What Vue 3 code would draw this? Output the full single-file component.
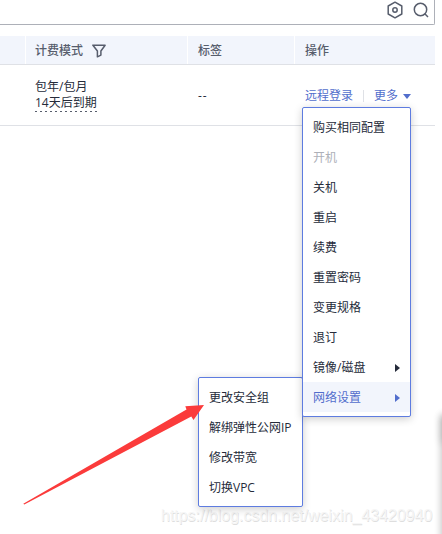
<script setup>
const items = [
  { label: '购买相同配置' },
  { label: '开机', disabled: true },
  { label: '关机' },
  { label: '重启' },
  { label: '续费' },
  { label: '重置密码' },
  { label: '变更规格' },
  { label: '退订' },
  { label: '镜像/磁盘', sub: true },
  { label: '网络设置', sub: true, active: true },
]
const subItems = ['更改安全组', '解绑弹性公网IP', '修改带宽', '切换VPC']
</script>

<template>
  <main class="page">
    <div class="search">
      <svg class="ico" width="18" height="18" viewBox="0 0 18 18">
        <path d="M9 1.2 15.8 5v8L9 16.8 2.2 13V5Z" stroke-linejoin="round" />
        <circle cx="9" cy="9" r="2.2" />
      </svg>
      <svg class="ico" width="18" height="18" viewBox="0 0 18 18">
        <circle cx="8.5" cy="8.5" r="6.2" />
        <path d="m12.8 12.8 3.2 3.2" />
      </svg>
    </div>

    <div class="row head">
      <div class="cell"></div>
      <div class="cell mode">
        计费模式
        <svg class="filter" width="14" height="14" viewBox="0 0 14 14">
          <path d="M.9 1.2h12.2L8.9 7v4.1l-3.5 1.7V7Z" stroke-linejoin="round" />
        </svg>
      </div>
      <div class="cell">标签</div>
      <div class="cell">操作</div>
    </div>

    <div class="row body">
      <div class="cell"></div>
      <div class="cell billing">
        <span>包年/包月</span>
        <span class="expire">14天后到期</span>
      </div>
      <div class="cell dashes">--</div>
      <div class="cell ops">
        <a>远程登录</a>
        <i class="bar"></i>
        <a>更多</a>
        <svg class="caret" width="8" height="5" viewBox="0 0 8 5"><path d="M0 0h8L4 5Z" /></svg>
      </div>
    </div>

    <div class="watermark">https://blog.csdn.net/weixin_43420940</div>
    <ul class="menu sub">
      <li v-for="s in subItems" :key="s"><span>{{ s }}</span></li>
    </ul>
    <ul class="menu main">
      <li v-for="i in items" :key="i.label" :class="{ disabled: i.disabled, active: i.active }">
        <span>{{ i.label }}</span>
        <svg v-if="i.sub" width="5" height="8" viewBox="0 0 5 8"><path d="M0 0 5 4 0 8Z" /></svg>
      </li>
    </ul>

    <svg class="arrow" width="182" height="102" viewBox="0 0 182 102">
      <path d="M.3 100.8 163.5 6.4 162.3 3.2 181 2 170.5 17 168.3 13.5 1.3 101.5Z" />
    </svg>
    <div class="edge"></div>
    <div class="edge top"></div>
  </main>
</template>

<style>
body { background: #fff; overflow: hidden; }
</style>

<style scoped>
.page {
  position: relative;
  box-sizing: border-box;
  width: 442px;
  height: 534px;
  overflow: hidden;
  font: 12px/16px "Open Sans", "Noto Sans CJK SC", sans-serif;
  color: #252b3a;
}
.search {
  display: flex;
  box-sizing: border-box;
  width: 435px;
  height: 25px;
  padding: 1px 4px 0 0;
  justify-content: flex-end;
  gap: 8px;
  border: solid #adb0b8;
  border-width: 0 1px 1px 0;
  border-radius: 0 0 2px 0;
}
.ico, .filter { fill: none; stroke: #575d6c; stroke-width: 1.5; }
.row {
  display: grid;
  grid-template-columns: 26px 162px 107px 140px;
  box-sizing: border-box;
  width: 435px;
  border-bottom: 1px solid #dfe1e6;
}
.head { height: 29px; margin-top: 11px; background: #f2f5fc; color: #575d6c; font-weight: 500; }
.body { height: 61px; }
.cell { display: flex; align-items: center; box-sizing: border-box; padding-left: 10px; }
.head .cell { padding-top: 1px; border-right: 1px solid #fff; }
.head .cell:last-child { border-right: 0; }
.head .mode { padding-left: 9px; }
.filter { margin-left: 9px; }
.body .cell { padding-top: 2px; }
.billing { flex-direction: column; align-items: flex-start; justify-content: center; }
.body .billing { padding: 1px 0 0 9px; }
.expire {
  height: 17px;
  background: repeating-linear-gradient(90deg, #575d6c 0 2px, transparent 2px 5px) left bottom / 100% 1px no-repeat;
}
.dashes { letter-spacing: 1px; }
.ops { color: #526ecc; }
.bar { width: 1px; height: 12px; margin: 0 10px; background: #dfe1e6; }
.caret { margin: 1px 0 0 5px; fill: #526ecc; }
.menu {
  position: absolute;
  box-sizing: border-box;
  margin: 0;
  padding: 4px 0;
  list-style: none;
  background: #fff;
  border: 1px solid #5e7ce0;
  border-radius: 2px;
  box-shadow: 0 2px 8px rgba(0, 0, 0, .2);
}
.main { left: 302px; top: 107px; width: 109px; height: 310px; }
.sub { left: 198px; top: 377px; width: 105px; height: 130px; }
.menu li {
  display: flex;
  align-items: center;
  justify-content: space-between;
  box-sizing: border-box;
  height: 30px;
  padding: 1px 10px 0;
  white-space: nowrap;
}
.menu svg { fill: currentColor; }
.menu .disabled { color: #adb0b8; }
.menu .active { background: #f2f5fc; color: #526ecc; }
.arrow { position: absolute; left: 23px; top: 403px; fill: #fb3b3b; }
.edge {
  position: absolute;
  left: 442px;
  top: 416px;
  width: 20px;
  height: 150px;
  box-shadow: 0 0 7px 1px rgba(0, 0, 0, .24);
}
.top { height: 26px; box-shadow: 0 0 8px 1px rgba(0, 0, 0, .16); }
.watermark {
  position: absolute;
  left: 161px;
  top: 507px;
  font: 16px/18px "Liberation Sans", sans-serif;
  letter-spacing: -.02px;
  color: #f6f6f6;
  text-shadow: .5px .5px 0 #dedede;
  white-space: nowrap;
}
</style>
